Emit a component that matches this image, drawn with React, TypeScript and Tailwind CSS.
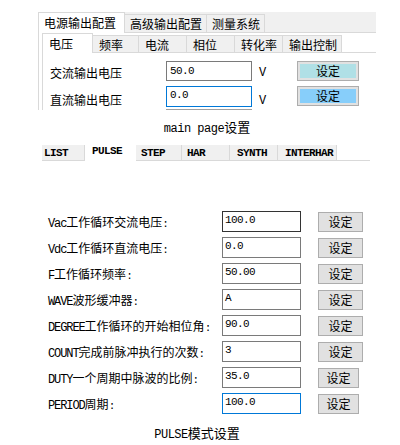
import React from 'react'

const cjk = "[font-family:'Noto_Sans_CJK_SC','Liberation_Sans',sans-serif]"
const mono = "[font-family:'Liberation_Mono','Noto_Sans_CJK_SC',monospace]"

const outerTabs = [
  { label: '电源输出配置', w: 'w-[87px]', active: true },
  { label: '高级输出配置', w: 'w-[82px]', active: false },
  { label: '测量系统', w: 'w-[58px]', active: false },
]

const innerTabs = [
  { label: '电压', w: 'w-[50px]', active: true },
  { label: '频率', w: 'w-[46px]', active: false },
  { label: '电流', w: 'w-[48px]', active: false },
  { label: '相位', w: 'w-[48px]', active: false },
  { label: '转化率', w: 'w-[48px]', active: false },
  { label: '输出控制', w: 'w-[59px]', active: false },
]

const modeTabs = [
  { label: 'LIST', w: 'w-[43px]', pl: 'pl-[2px]', active: false },
  { label: 'PULSE', w: 'w-[51px]', pl: 'pl-[7px]', active: true },
  { label: 'STEP', w: 'w-[46px]', pl: 'pl-[5px]', active: false },
  { label: 'HAR', w: 'w-[48px]', pl: 'pl-[5px]', active: false },
  { label: 'SYNTH', w: 'w-[48px]', pl: 'pl-[7px]', active: false },
  { label: 'INTERHAR', w: 'w-[59px]', pl: 'pl-[7px]', active: false },
]

const pulseRows = [
  { a: 'Vac', c: '工作循环交流电压', e: ':', value: '100.0', box: 'border-[#333333]', btn: 'w-[45px]' },
  { a: 'Vdc', c: '工作循环直流电压', e: ':', value: '0.0', box: 'border-[#7a7a7a]', btn: 'w-[45px]' },
  { a: 'F', c: '工作循环频率', e: ':', value: '50.00', box: 'border-[#7a7a7a]', btn: 'w-[45px]' },
  { a: 'WAVE', c: '波形缓冲器', e: ':', value: 'A', box: 'border-[#7a7a7a]', btn: 'w-[45px]' },
  { a: 'DEGREE', c: '工作循环的开始相位角', e: ':', value: '90.0', box: 'border-[#7a7a7a]', btn: 'w-[45px]' },
  { a: 'COUNT', c: '完成前脉冲执行的次数', e: ':', value: '3', box: 'border-[#7a7a7a]', btn: 'w-[45px]' },
  { a: 'DUTY', c: '一个周期中脉波的比例', e: ':', value: '35.0', box: 'border-[#7a7a7a]', btn: 'w-[41px]' },
  { a: 'PERIOD', c: '周期', e: ':', value: '100.0', box: 'border-[#0078d7]', btn: 'w-[41px]' },
]

function MainPage() {
  return (
    <div className="pt-[12px] pl-[38px] w-[376px]">
      {/* outer tab bar */}
      <div className={`flex items-end h-[21px] bg-[#f0f0f0] ${cjk}`}>
        {outerTabs.map((t) =>
          t.active ? (
            <div key={t.label} className={`${t.w} h-[21px] bg-white border-t border-l border-r border-[#d9d9d9] text-[12px] leading-[20px] text-black pl-[5px]`}>
              {t.label}
            </div>
          ) : (
            <div key={t.label} className={`${t.w} h-[19px] bg-[#f0f0f0] border-t border-r border-b border-[#d9d9d9] text-[12px] leading-[18px] text-black pl-[5px]`}>
              {t.label}
            </div>
          )
        )}
        <div className="flex-1 h-full border-b border-[#d9d9d9]" />
      </div>

      {/* outer pane */}
      <div className="border-l border-[#d9d9d9] h-[77px] pl-[3px]">
        <div className="border-l border-[#d9d9d9] h-full">
          {/* inner tab bar */}
          <div className={`flex items-end h-[20px] ${cjk}`}>
            {innerTabs.map((t) =>
              t.active ? (
                <div key={t.label} className={`${t.w} h-[20px] bg-white border-t border-r border-[#d9d9d9] text-[12px] leading-[20px] pl-[6px]`}>
                  {t.label}
                </div>
              ) : (
                <div key={t.label} className={`${t.w} h-[18px] bg-[#f0f0f0] border-t border-r border-b border-[#d9d9d9] text-[12px] leading-[17px] pl-[6px]`}>
                  {t.label}
                </div>
              )
            )}
            <div className="flex-1 h-full border-b border-[#d9d9d9]" />
          </div>

          {/* rows */}
          <div className="pt-[8px] pl-[7px] flex flex-col gap-[5px]">
            <div className="flex items-center h-[20px]">
              <div className={`w-[116px] text-[12px] leading-[20px] ${cjk} pt-[4px]`}>交流输出电压</div>
              <div className={`w-[86px] h-[20px] border border-[#7a7a7a] pl-[3px] text-[11px] leading-[18px] tracking-[-0.6px] ${mono}`}>50.0</div>
              <div className={`w-[45px] pl-[7px] pt-[3px] text-[12px] ${mono}`}>V</div>
              <div className="w-[62px] h-[20px] border border-[#adadad] bg-[#e1e1e1] p-[2px] flex">
                <div className={`flex-1 bg-[#b0e0e6] flex items-center justify-center text-[12px] leading-none ${cjk}`}>设定</div>
              </div>
            </div>
            <div className="flex items-center h-[20px]">
              <div className={`w-[116px] text-[12px] leading-[20px] ${cjk} pt-[8px]`}>直流输出电压</div>
              <div className={`w-[86px] h-[21px] border border-[#0078d7] pl-[3px] text-[11px] leading-[16px] tracking-[-0.6px] ${mono}`}>0.0</div>
              <div className={`w-[45px] pl-[7px] pt-[10px] text-[12px] ${mono}`}>V</div>
              <div className="w-[62px] h-[20px] border border-[#adadad] bg-[#e1e1e1] p-[2px] flex">
                <div className={`flex-1 bg-[#87cefa] flex items-center justify-center text-[12px] leading-none ${cjk}`}>设定</div>
              </div>
            </div>
            <div className="pl-[116px]">
              <div className="w-[86px] border-t border-[#a0a0a0] mt-[-2px]" />
            </div>
          </div>
        </div>
      </div>
    </div>
  )
}

function PulsePage() {
  return (
    <div>
      {/* mode tab bar */}
      <div className={`flex items-end ml-[42px] w-[328px] h-[16px] ${mono}`}>
        {modeTabs.map((t) =>
          t.active ? (
            <div key={t.label} className={`${t.w} ${t.pl} h-[16px] bg-white text-[11px] font-bold leading-[12px] tracking-[-0.6px]`}>
              {t.label}
            </div>
          ) : (
            <div key={t.label} className={`${t.w} ${t.pl} h-[16px] bg-[#f0f0f0] border-r border-b border-[#d9d9d9] text-[11px] font-bold leading-[17px] tracking-[-0.6px]`}>
              {t.label}
            </div>
          )
        )}
        <div className="flex-1 h-full border-b border-[#d9d9d9]" />
      </div>

      {/* form */}
      <div className="mt-[50px] pl-[48px] flex flex-col gap-[5px]">
        {pulseRows.map((r) => (
          <div key={r.a} className="flex items-center h-[21px]">
            <div className={`w-[174px] text-[12px] leading-[21px] pt-[2px] ${mono} whitespace-nowrap`}>
              <span className="text-[12px] tracking-[-1.1px]">{r.a}</span>
              <span className={cjk}>{r.c}</span>
              <span className="text-[11px] tracking-[-0.6px]">{r.e}</span>
            </div>
            <div className={`w-[79px] h-[21px] border ${r.box} pl-[2px] text-[11px] leading-[16px] tracking-[-0.6px] ${mono}`}>
              {r.value}
            </div>
            <div className="w-[17px]" />
            <div className={`${r.btn} h-[20px] border border-[#adadad] bg-[#e1e1e1] flex items-center justify-center text-[12px] leading-none ${cjk}`}>
              设定
            </div>
          </div>
        ))}
      </div>
    </div>
  )
}

export default function App() {
  return (
    <div className="w-[400px] h-[445px] bg-white text-black overflow-hidden">
      <MainPage />

      <div className={`mt-[11px] pl-[14px] text-center text-[13px] leading-[16px] ${mono}`}>
        <span className="text-[12px] tracking-[-0.5px]">main page</span>设置
      </div>

      <div className="mt-[8px]">
        <PulsePage />
      </div>

      <div className={`mt-[13px] pr-[6px] text-center text-[13px] leading-[16px] ${mono}`}>
        <span className="text-[12px] tracking-[-0.5px]">PULSE</span>模式设置
      </div>
    </div>
  )
}
